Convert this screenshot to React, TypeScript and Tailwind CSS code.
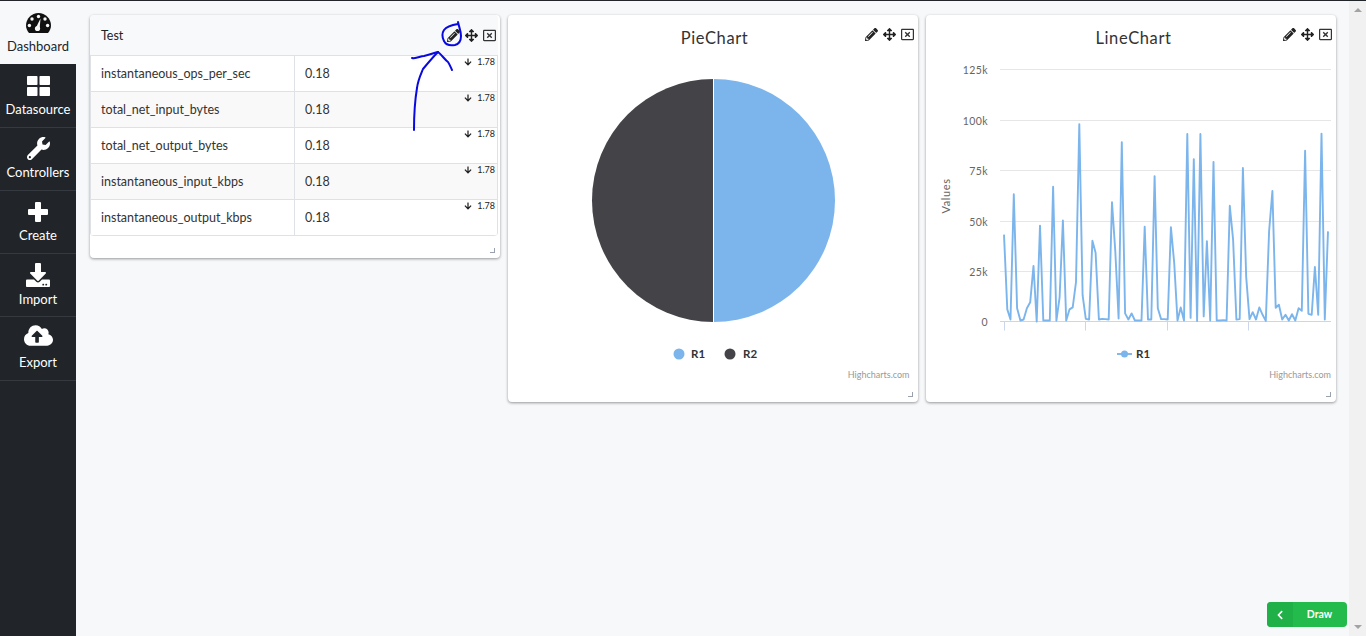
import {
  FaWrench, FaDownload, FaCloudUploadAlt,
  FaPencilAlt, FaArrowsAlt, FaRegWindowClose, FaArrowDown, FaChevronLeft,
} from 'react-icons/fa'
import type { ReactNode } from 'react'

function GaugeIcon() {
  return (
    <svg className="mb-px" width="25" height="20" viewBox="0 0 25 20">
      <path d="M3 20 C1 17.5 0 15 0 12.5 C0 5.6 5.6 0 12.5 0 S25 5.6 25 12.5 C25 15 24 17.5 22 20 Z" fill="#111" />
      <g fill="#f7f8fa">
        <circle cx="12.5" cy="3.5" r="1.7" />
        <circle cx="6" cy="6" r="1.7" />
        <circle cx="3.4" cy="12.5" r="1.7" />
        <circle cx="19" cy="6" r="1.7" />
        <circle cx="21.6" cy="12.5" r="1.7" />
        <circle cx="11.5" cy="15.5" r="2.6" />
        <path d="M9.8 15 L14.5 5.5 L13.6 16 Z" />
      </g>
    </svg>
  )
}

function GridIcon() {
  return (
    <svg className="mb-px" width="23" height="20" viewBox="0 0 23 20" fill="#fff">
      <rect x="0" y="0" width="10.5" height="9" rx="0.8" />
      <rect x="12.5" y="0" width="10.5" height="9" rx="0.8" />
      <rect x="0" y="11" width="10.5" height="9" rx="0.8" />
      <rect x="12.5" y="11" width="10.5" height="9" rx="0.8" />
    </svg>
  )
}

function PlusIcon() {
  return (
    <svg className="mb-px" width="20" height="20" viewBox="0 0 20 20" fill="#fff">
      <path d="M7 1 a1 1 0 0 1 1 -1 h4 a1 1 0 0 1 1 1 v6 h6 a1 1 0 0 1 1 1 v4 a1 1 0 0 1 -1 1 h-6 v6 a1 1 0 0 1 -1 1 h-4 a1 1 0 0 1 -1 -1 v-6 h-6 a1 1 0 0 1 -1 -1 v-4 a1 1 0 0 1 1 -1 h6 Z" />
    </svg>
  )
}

// heights alternate 63/64 as in the page, the rows don't divide evenly
const NAV: { label: string; icon: ReactNode; cls: string; active?: boolean }[] = [
  { label: 'Dashboard', icon: <GaugeIcon />, cls: 'h-[63px] pb-[9px]', active: true },
  { label: 'Datasource', icon: <GridIcon />, cls: 'h-16 pb-[9px]' },
  { label: 'Controllers', icon: <FaWrench size={23} />, cls: 'h-[63px] pb-[9px]' },
  { label: 'Create', icon: <PlusIcon />, cls: 'h-[63px] pb-[9px]' },
  { label: 'Import', icon: <FaDownload size={24} />, cls: 'h-[63px] pb-2' },
  { label: 'Export', icon: <FaCloudUploadAlt size={29} />, cls: 'h-16 pb-[9px]' },
]

const ROWS = [
  'instantaneous_ops_per_sec',
  'total_net_input_bytes',
  'total_net_output_bytes',
  'instantaneous_input_kbps',
  'instantaneous_output_kbps',
]

// values in thousands, one per point
const SERIES = [
  43, 6, 1, 63, 6.6, 0.5, 1, 6.6, 9.5, 27.5, 0, 47.5, 0.5, 0.5, 0.5, 66.7, 0.4, 12, 50, 0.5,
  6, 7, 19.5, 97.7, 13, 1.3, 1, 40, 34, 1, 1.3, 1.2, 1, 59, 34.7, 1.5, 88.8, 4, 1, 4,
  0.5, 0.5, 0.5, 47, 1, 1, 72, 6.6, 1.2, 1.2, 1, 46.7, 29, 0.5, 7, 0.5, 92.8, 1.8, 80.4, 0.2,
  92.8, 2.5, 39.8, 0.5, 79, 0.5, 0.5, 0.7, 0.5, 57.3, 40.5, 1, 1.2, 76, 22, 1.2, 4.6, 1, 7, 3.3,
  0.3, 44.6, 64.6, 6.8, 8.3, 1, 3.3, 0.5, 3.6, 0.5, 6.6, 5.3, 84.5, 3.8, 3.3, 27, 3.3, 93, 1, 44.6,
]

const LATO = { fontFamily: 'Lato, sans-serif' }

function WidgetIcons() {
  return (
    <div className="flex items-center gap-[5px] text-[#222]">
      <FaPencilAlt size={13} />
      <FaArrowsAlt size={13} />
      <FaRegWindowClose size={13} className="text-[#333]" />
    </div>
  )
}

function ResizeHandle() {
  return <div className="absolute right-[5px] bottom-[5px] w-[5px] h-[5px] border-r border-b border-gray-400" />
}

function TableWidget() {
  return (
    <div className="relative w-[410px] h-[243px] bg-white rounded shadow-[0_1px_3px_rgba(0,0,0,0.4)] pr-0.5">
      <div className="h-[41px] flex items-center justify-between pl-[11px] pr-[2px] pt-px bg-[#f8f9fa] border-b border-[#dee2e6] rounded-t">
        <span className="pt-[2px] text-[12.5px] text-[#222]">Test</span>
        <WidgetIcons />
      </div>
      <div className="border-x border-[#dee2e6] rounded-b overflow-hidden">
        {ROWS.map((name, i) => (
          <div key={name} className={`relative flex h-9 text-[12.5px] text-[#333] border-b border-[#dee2e6] ${i % 2 ? 'bg-[#f9f9f9]' : 'bg-white'}`}>
            <div className="w-[204px] pl-[10px] pt-[2px] flex items-center border-r border-[#dee2e6]">{name}</div>
            <div className="pl-[10px] pt-[2px] flex items-center">0.18</div>
            <div className="absolute top-px right-[2px] flex items-center gap-[5px] text-[9px] leading-[10px] text-[#222]">
              <FaArrowDown size={8} />
              <span>1.78</span>
            </div>
          </div>
        ))}
      </div>
      <ResizeHandle />
    </div>
  )
}

function PieWidget() {
  return (
    <div className="relative w-[410px] h-[387px] bg-white rounded shadow-[0_1px_3px_rgba(0,0,0,0.4)]">
      <div className="absolute top-[13px] right-[4px]"><WidgetIcons /></div>
      <svg width="410" height="387" style={LATO}>
        <text x="206.5" y="29" textAnchor="middle" fontSize="16.5" letterSpacing="0.6" fill="#333">PieChart</text>
        <path d="M205.5 64 A121.5 121.5 0 0 1 205.5 307 Z" fill="#7cb5ec" />
        <path d="M205.5 64 A121.5 121.5 0 0 0 205.5 307 Z" fill="#434348" />
        <line x1="205.5" y1="64" x2="205.5" y2="307" stroke="#fff" strokeWidth="1" />
        <circle cx="171" cy="339" r="5.5" fill="#7cb5ec" />
        <text x="183" y="343" fontSize="11.5" fontWeight="700" fill="#333">R1</text>
        <circle cx="222" cy="339" r="5.5" fill="#434348" />
        <text x="235" y="343" fontSize="11.5" fontWeight="700" fill="#333">R2</text>
        <text x="401.5" y="363" textAnchor="end" fontSize="9" fill="#999">Highcharts.com</text>
      </svg>
      <ResizeHandle />
    </div>
  )
}

function LineWidget() {
  const zero = 306.5
  const perK = 2.02
  const pts = SERIES.map((v, i) => `${(78 + i * 3.273).toFixed(1)},${(zero - v * perK).toFixed(1)}`).join(' ')
  const ticks = [0, 25, 50, 75, 100, 125]
  return (
    <div className="relative w-[410px] h-[387px] bg-white rounded shadow-[0_1px_3px_rgba(0,0,0,0.4)]">
      <div className="absolute top-[13px] right-[4px]"><WidgetIcons /></div>
      <svg width="410" height="387" style={LATO}>
        <text x="207.5" y="29" textAnchor="middle" fontSize="16.5" letterSpacing="0.6" fill="#333">LineChart</text>
        {ticks.map(t => {
          const y = t ? Math.round(zero - t * perK) + 0.5 : zero
          return (
            <g key={t}>
              {t > 0 && <line x1="74" x2="405" y1={y} y2={y} stroke="#e6e6e6" />}
              <text x="62" y={y + 4} textAnchor="end" fontSize="10.5" letterSpacing="0.4" fill="#666">{t ? `${t}k` : '0'}</text>
            </g>
          )
        })}
        <text transform="translate(24 181) rotate(-90)" textAnchor="middle" fontSize="11" letterSpacing="0.6" fill="#666">Values</text>
        <line x1="74" x2="405" y1={zero} y2={zero} stroke="#ccd6eb" />
        {[78.5, 159.5, 241.5, 322.5].map(x => (
          <line key={x} x1={x} x2={x} y1={zero} y2={zero + 9} stroke="#ccd6eb" />
        ))}
        <polyline points={pts} fill="none" stroke="#7cb5ec" strokeWidth="1.9" strokeLinejoin="round" />
        <line x1="191" x2="206" y1="339" y2="339" stroke="#7cb5ec" strokeWidth="1.9" />
        <circle cx="198.5" cy="339" r="3.5" fill="#7cb5ec" />
        <text x="210" y="343" fontSize="11.5" fontWeight="700" fill="#333">R1</text>
        <text x="405" y="363" textAnchor="end" fontSize="9" fill="#999">Highcharts.com</text>
      </svg>
      <ResizeHandle />
    </div>
  )
}

export default function App() {
  return (
    <div className="relative flex h-[636px] w-[1366px] overflow-hidden bg-[#f7f8fa] border-t border-[#212529]" style={LATO}>
      {/* Sidebar */}
      <nav className="w-[76px] shrink-0 bg-[#212529] flex flex-col">
        {NAV.map(({ label, icon, cls, active }) => (
          <div
            key={label}
            className={`${cls} flex flex-col items-center justify-end gap-[3px] text-[13px] leading-[18px] ${active ? 'bg-[#f7f8fa] text-[#212529]' : 'text-white border-b border-[#343a40]'}`}
          >
            {icon}
            <span>{label}</span>
          </div>
        ))}
      </nav>

      {/* Widgets */}
      <main className="flex-1 flex items-start gap-2 pl-[14px] pt-[14px]">
        <TableWidget />
        <PieWidget />
        <LineWidget />
      </main>

      {/* Scrollbar */}
      <div className="w-[17px] shrink-0 bg-[#f1f1f1] flex flex-col items-center justify-between py-[7px]">
        <div className="w-0 h-0 border-x-[4px] border-x-transparent border-b-[4px] border-b-[#a3a3a3]" />
        <div className="w-0 h-0 border-x-[4px] border-x-transparent border-t-[4px] border-t-[#a3a3a3]" />
      </div>

      {/* Draw button */}
      <div className="absolute left-[1267px] top-[601px] w-20 h-[25px] flex rounded overflow-hidden text-white text-[10.5px] font-bold bg-[#22bb4c]">
        <div className="w-[26px] flex items-center justify-center bg-[#20b048]"><FaChevronLeft size={10} /></div>
        <div className="flex-1 flex items-center justify-center pr-[1px]">Draw</div>
      </div>

      {/* Hand-drawn annotation */}
      <svg className="absolute left-0 top-[-1px] pointer-events-none" width="1366" height="636" fill="none" stroke="#0808e0" strokeWidth="2" strokeLinecap="round" strokeLinejoin="round">
        <path d="M458 22 C459 27 461 31 461 36 C461 41 459 44 455 45 C450 46 446 45 444 41 C442 37 442 33 444 30 C447 26 452 25 458 24" />
        <path d="M414 130 C414 115 415 100 417 88 C418 80 421 74 423 69 C428 63 433 57 438 52" />
        <path d="M412 58 C417 59 420 56 424 56 C429 55 434 53 438 52 C442 55 445 60 448 62 C450 65 451 68 452 70" />
      </svg>
    </div>
  )
}
